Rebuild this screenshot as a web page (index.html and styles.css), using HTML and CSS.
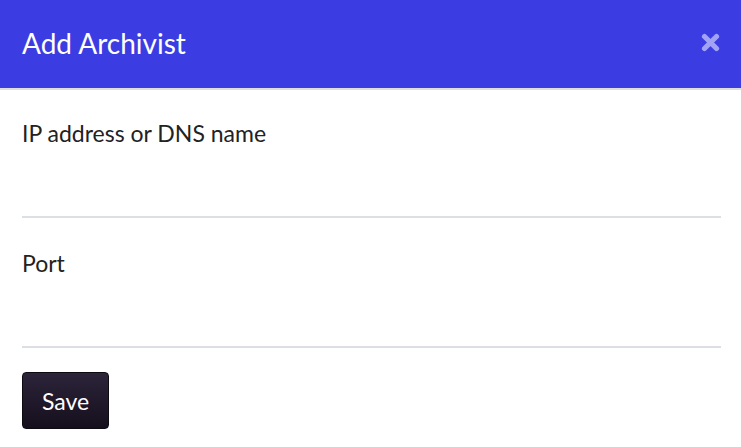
FILE: index.html
```html
<!DOCTYPE html>
<html>
<head>
<meta charset="utf-8">
<link rel="stylesheet" href="styles.css">
</head>
<body>
<div class="modal">
  <div class="modal-header">
    <h1 class="modal-title">Add Archivist</h1>
    <button class="close" aria-label="Close">
      <svg width="19" height="19" viewBox="0 0 19 19"><path d="M3.5 3.5 L15.5 15.5 M15.5 3.5 L3.5 15.5" stroke="#a3a3f4" stroke-width="5.2" stroke-linecap="round"/></svg>
    </button>
  </div>
  <form class="modal-body">
    <div class="field">
      <label class="field-label">IP address or DNS name</label>
      <input class="field-input" type="text">
    </div>
    <div class="field">
      <label class="field-label">Port</label>
      <input class="field-input" type="text">
    </div>
    <button class="save" type="button">Save</button>
  </form>
</div>
</body>
</html>
```

FILE: styles.css
```css
html, body {
  margin: 0;
  padding: 0;
  background: #ffffff;
  font-family: "Lato", "Open Sans", sans-serif;
}
.modal {
  width: 741px;
}
.modal-header {
  height: 88px;
  background: #3b3de2;
  border-bottom: 2px solid #dedede;
  display: flex;
  align-items: center;
  justify-content: space-between;
  padding: 0 20px 0 22px;
  box-sizing: content-box;
}
.modal-title {
  margin: 0;
  color: #ffffff;
  font-size: 28px;
  font-weight: 400;
  line-height: 1;
  padding-bottom: 2px;
}
.close {
  background: none;
  border: none;
  padding: 0;
  margin: 0 1px 4px 0;
  display: flex;
  cursor: pointer;
}
.modal-body {
  padding: 28px 20px 0 22px;
  display: flex;
  flex-direction: column;
}
.field {
  display: flex;
  flex-direction: column;
}
.field-label {
  color: #222222;
  font-size: 23px;
  line-height: 30px;
}
.field-input {
  border: none;
  border-bottom: 2px solid #dcdfe3;
  height: 70px;
  padding: 0;
  margin-bottom: 30px;
  font-family: inherit;
  font-size: 20px;
  outline: none;
  box-sizing: border-box;
}
.save {
  align-self: flex-start;
  margin-top: -6px;
  width: 87px;
  height: 57px;
  border: 1px solid #0d0a12;
  border-radius: 4px;
  background: linear-gradient(#2c2439, #150f1d);
  color: #ffffff;
  font-family: inherit;
  font-size: 23px;
  padding: 0;
}
```
